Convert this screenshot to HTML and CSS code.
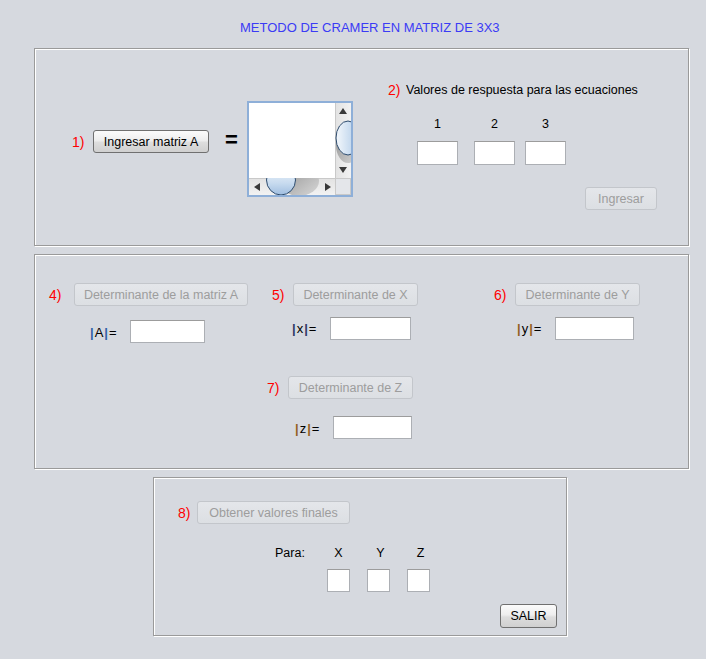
FILE: index.html
```html
<!DOCTYPE html>
<html>
<head>
<meta charset="utf-8">
<title>Cramer 3x3</title>
<link rel="stylesheet" href="styles.css">
</head>
<body>
<div class="title">METODO DE CRAMER EN MATRIZ DE 3X3</div>

<section class="panel p1">
  <div class="step1">
    <span class="num w21">1)</span>
    <div class="btn w116">Ingresar matriz A</div>
    <span class="eq">=</span>
  </div>
  <div class="scroll">
    <svg width="106" height="96" viewBox="0 0 106 96">
      <defs>
        <linearGradient id="thumbV" x1="0" y1="0" x2="1" y2="0">
          <stop offset="0" stop-color="#f4f8fc"/>
          <stop offset="0.6" stop-color="#c8dbef"/>
          <stop offset="1" stop-color="#9fbde0"/>
        </linearGradient>
        <linearGradient id="thumbH" x1="0" y1="0" x2="0" y2="1">
          <stop offset="0" stop-color="#f4f8fc"/>
          <stop offset="0.6" stop-color="#c8dbef"/>
          <stop offset="1" stop-color="#9fbde0"/>
        </linearGradient>
        <linearGradient id="trackV" x1="0" y1="0" x2="1" y2="0">
          <stop offset="0" stop-color="#e2e2e2"/>
          <stop offset="1" stop-color="#f2f2f2"/>
        </linearGradient>
        <linearGradient id="trackH" x1="0" y1="0" x2="0" y2="1">
          <stop offset="0" stop-color="#e2e2e2"/>
          <stop offset="1" stop-color="#f2f2f2"/>
        </linearGradient>
        <linearGradient id="shadow" x1="0" y1="0" x2="1" y2="1">
          <stop offset="0" stop-color="#8e8e8e"/>
          <stop offset="1" stop-color="#d8d8d8"/>
        </linearGradient>
        <clipPath id="clipV"><rect x="88" y="2" width="16" height="75"/></clipPath>
        <clipPath id="clipH"><rect x="2" y="77" width="86" height="17"/></clipPath>
      </defs>
      <rect x="0" y="0" width="106" height="96" fill="#8eafd8"/>
      <rect x="2" y="2" width="102" height="92" fill="#ffffff"/>
      <rect x="88" y="2" width="16" height="75" fill="url(#trackV)"/>
      <line x1="88.5" y1="2" x2="88.5" y2="77" stroke="#c9c9c9"/>
      <g clip-path="url(#clipV)">
        <ellipse cx="101" cy="44" rx="12" ry="18" fill="url(#shadow)"/>
        <ellipse cx="101" cy="37" rx="12" ry="17" fill="url(#thumbV)" stroke="#2d4b6d" stroke-width="1"/>
      </g>
      <polygon points="92,13 100,13 96,7" fill="#3a3a3a"/>
      <polygon points="92,66 100,66 96,72" fill="#3a3a3a"/>
      <rect x="2" y="77" width="86" height="17" fill="url(#trackH)"/>
      <line x1="2" y1="77.5" x2="88" y2="77.5" stroke="#c9c9c9"/>
      <g clip-path="url(#clipH)">
        <ellipse cx="52" cy="80" rx="20" ry="15" fill="url(#shadow)"/>
        <ellipse cx="34" cy="79" rx="14.5" ry="15" fill="url(#thumbH)" stroke="#2d4b6d" stroke-width="1"/>
      </g>
      <polygon points="13,82 13,90 7,86" fill="#3a3a3a"/>
      <polygon points="78,82 78,90 84,86" fill="#3a3a3a"/>
      <rect x="88.5" y="77.5" width="15" height="16" fill="#e4e6ea" stroke="#c9c9c9"/>
    </svg>
  </div>
  <div class="answers">
    <div class="head"><span class="num w18">2)</span><span>Valores de respuesta para las ecuaciones</span></div>
    <div class="cols">
      <div class="col"><span class="lbl">1</span><div class="field c41"></div></div>
      <div class="col g16"><span class="lbl">2</span><div class="field c41"></div></div>
      <div class="col g10"><span class="lbl">3</span><div class="field c41"></div></div>
    </div>
    <div class="btn dis ingresar">Ingresar</div>
  </div>
</section>

<section class="panel p2">
  <div class="row1">
    <div class="grp ga">
      <div class="brow"><span class="num w25">4)</span><div class="btn dis w174">Determinante de la matriz A</div></div>
      <div class="vrow va"><span class="det w40"><i class="pa">|</i>A<i class="pa">|</i>=</span><div class="field w75"></div></div>
    </div>
    <div class="grp gx">
      <div class="brow"><span class="num w21">5)</span><div class="btn dis w125">Determinante de X</div></div>
      <div class="vrow vx"><span class="det w38"><i class="px">|</i>x<i class="px">|</i>=</span><div class="field w81"></div></div>
    </div>
    <div class="grp gy">
      <div class="brow"><span class="num w21">6)</span><div class="btn dis w125">Determinante de Y</div></div>
      <div class="vrow vy"><span class="det w38"><i class="po">|</i>y<i class="po">|</i>=</span><div class="field w79"></div></div>
    </div>
  </div>
  <div class="grp gz">
    <div class="brow"><span class="num w21">7)</span><div class="btn dis w125">Determinante de Z</div></div>
    <div class="vrow vz"><span class="det w38"><i class="po">|</i>z<i class="po">|</i>=</span><div class="field w79"></div></div>
  </div>
</section>

<section class="panel p3">
  <div class="brow r8"><span class="num w19">8)</span><div class="btn dis w153">Obtener valores finales</div></div>
  <div class="para">
    <span class="plbl">Para:</span>
    <span class="lbl">X</span>
    <span class="lbl ly">Y</span>
    <span class="lbl lz">Z</span>
    <span></span>
    <div class="field sq"></div>
    <div class="field sq"></div>
    <div class="field sq"></div>
  </div>
  <div class="btn salir">SALIR</div>
</section>
</body>
</html>
```

FILE: styles.css
```css
* { box-sizing: border-box; }

body {
  margin: 0;
  width: 706px;
  height: 659px;
  background: #d6d9df;
  font-family: "Liberation Sans", Arial, sans-serif;
  font-size: 12.5px;
  color: #000;
  overflow: hidden;
}

.title {
  height: 48px;
  padding: 20px 0 0 240px;
  font-size: 13px;
  line-height: 16px;
  color: #3b3bf5;
}

.panel {
  border: 1px solid #9a9a9a;
  box-shadow: inset 1px 1px 0 #ffffff, 1px 1px 0 #ffffff;
}

.p1 {
  margin-left: 34px;
  width: 655px;
  height: 198px;
  display: flex;
  align-items: flex-start;
}

.p2 {
  margin: 8px 0 0 34px;
  width: 655px;
  height: 215px;
}

.p3 {
  margin: 8px 0 0 153px;
  width: 414px;
  height: 159px;
}

.num {
  display: inline-block;
  color: #ff0000;
  font-size: 14px;
  line-height: 16px;
  flex: none;
}

.w18 { width: 18px; }
.w19 { width: 19px; }
.w21 { width: 21px; }
.w25 { width: 25px; }

.btn {
  height: 23px;
  border: 1px solid #707070;
  border-radius: 3px;
  background: linear-gradient(#fbfbfb, #eeeeee 45%, #dddddd 55%, #d0d0d0);
  display: flex;
  align-items: center;
  justify-content: center;
  font-size: 12.5px;
  white-space: nowrap;
  flex: none;
}

.btn.dis {
  border-color: #c3c6cb;
  background: linear-gradient(#e4e6ea, #dcdfe3);
  color: #9d9d9d;
}

.w116 { width: 116px; }
.w125 { width: 125px; }
.w153 { width: 153px; }
.w174 { width: 174px; }

.field {
  height: 23px;
  background: #fff;
  border: 1px solid #acafb4;
  border-top-color: #9c9c9c;
  flex: none;
}

.c41 { width: 41px; height: 24px; }
.w75 { width: 75px; }
.w79 { width: 79px; }
.w81 { width: 81px; }

/* panel 1 */
.step1 {
  display: flex;
  align-items: center;
  margin: 81px 0 0 37px;
}

.eq {
  width: 14px;
  margin-left: 16px;
  margin-top: -3px;
  font-size: 22px;
  font-weight: bold;
  line-height: 20px;
}

.scroll {
  margin: 52px 0 0 8px;
  width: 106px;
  height: 96px;
  flex: none;
}

.scroll svg { display: block; }

.answers {
  margin: 33px 0 0 35px;
  display: flex;
  flex-direction: column;
  align-items: flex-start;
}

.head {
  display: flex;
  align-items: center;
  line-height: 16px;
  white-space: nowrap;
}

.cols {
  display: flex;
  margin: 18px 0 0 29px;
}

.col {
  display: flex;
  flex-direction: column;
  align-items: center;
  gap: 9px;
}

.col.g16 { margin-left: 16px; }
.col.g10 { margin-left: 10px; }

.lbl { line-height: 16px; }

.ingresar {
  width: 72px;
  margin: 22px 0 0 197px;
}

/* panel 2 */
.row1 {
  display: flex;
  align-items: flex-start;
  margin-top: 28px;
}

.grp {
  display: flex;
  flex-direction: column;
  align-items: flex-start;
}

.brow {
  display: flex;
  align-items: center;
}

.vrow {
  display: flex;
  align-items: center;
}

.det {
  display: inline-block;
  line-height: 16px;
  font-size: 13px;
  letter-spacing: 1px;
  white-space: nowrap;
}

.det i { font-style: normal; font-weight: bold; }
.pa { color: #2f62a8; }
.px { color: #2e3766; }
.po { color: #946223; }

.w38 { width: 38px; }
.w40 { width: 40px; }

.ga { margin-left: 14px; }
.va { margin: 14px 0 0 41px; }
.va .det { margin-top: 3px; }

.gx { margin-left: 24px; }
.vx { margin: 11px 0 0 20px; }

.gy { margin-left: 76px; }
.vy { margin: 11px 0 0 23px; }

.gz { margin: 33px 0 0 232px; }
.vz { margin: 17px 0 0 28px; }
.vz .det { margin-top: 3px; }

/* panel 3 */
.r8 { margin: 23px 0 0 24px; }

.para {
  display: grid;
  grid-template-columns: 35px 23px 23px 23px;
  column-gap: 17px;
  row-gap: 8px;
  margin: 21px 0 0 121px;
  justify-items: center;
  width: max-content;
}

.plbl { justify-self: start; line-height: 16px; }
.ly { position: relative; left: 2px; }
.lz { position: relative; left: 2px; }

.sq { width: 23px; }

.salir {
  width: 57px;
  height: 24px;
  margin: 12px 0 0 346px;
}
```
